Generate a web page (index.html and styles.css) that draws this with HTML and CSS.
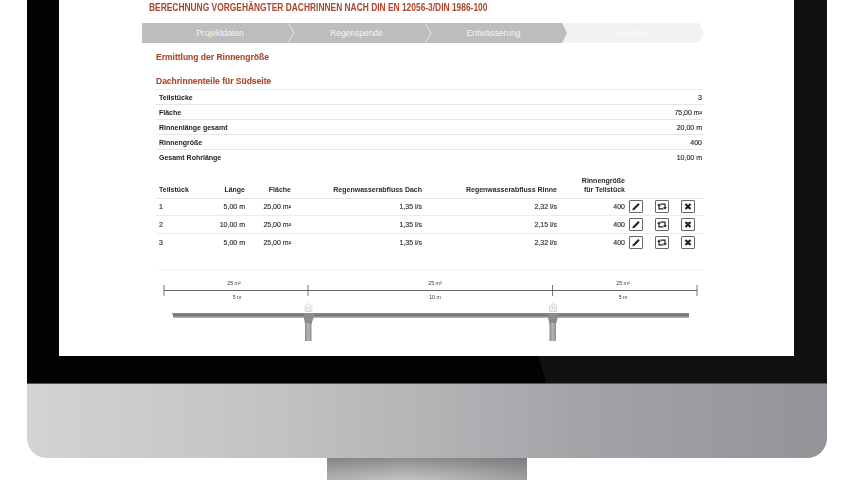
FILE: index.html
```html
<!DOCTYPE html>
<html lang="de">
<head>
<meta charset="utf-8">
<title>Berechnung vorgehängter Dachrinnen</title>
<link rel="stylesheet" href="styles.css">
</head>
<body>
<div class="monitor">
  <div class="bezel">
    <div class="glare"></div>
    <div class="screen">
      <div class="app">
        <h1 class="title"><span>BERECHNUNG VORGEHÄNGTER DACHRINNEN NACH DIN EN 12056-3/DIN 1986-100</span></h1>
        <div class="steps">
          <div class="step first">Projektdaten<svg class="tip" viewBox="0 0 7 20"><path d="M0 0L6 10L0 20Z" fill="#bdbdbd"/><path d="M0 0L6 10L0 20" fill="none" stroke="#fff" stroke-width=".6"/></svg></div>
          <div class="step">Regenspende<svg class="tip" viewBox="0 0 7 20"><path d="M0 0L6 10L0 20Z" fill="#bdbdbd"/><path d="M0 0L6 10L0 20" fill="none" stroke="#fff" stroke-width=".6"/></svg></div>
          <div class="step">Entwässerung<svg class="tip" viewBox="0 0 7 20"><path d="M0 0L5 10L0 20Z" fill="#bdbdbd"/></svg></div>
          <div class="step todo">Ergebnis<svg class="tip" viewBox="0 0 7 20"><path d="M0 0L5 10L0 20Z" fill="#f2f2f2"/></svg></div>
        </div>
        <div class="body">
          <h2 class="heading first-heading">Ermittlung der Rinnengröße</h2>
          <h2 class="heading second-heading">Dachrinnenteile für Südseite</h2>
          <div class="summary">
            <div class="row"><b>Teilstücke</b><span>3</span></div>
            <div class="row"><b>Fläche</b><span>75,00 m²</span></div>
            <div class="row"><b>Rinnenlänge gesamt</b><span>20,00 m</span></div>
            <div class="row"><b>Rinnengröße</b><span>400</span></div>
            <div class="row"><b>Gesamt Rohrlänge</b><span>10,00 m</span></div>
          </div>
          <table class="parts">
            <colgroup><col class="c1"><col class="c2"><col class="c3"><col class="c4"><col class="c5"><col class="c6"><col class="c7"></colgroup>
            <thead>
              <tr><th class="left">Teilstück</th><th>Länge</th><th>Fläche</th><th>Regenwasserabfluss Dach</th><th>Regenwasserabfluss Rinne</th><th>Rinnengröße<br>für Teilstück</th><th></th></tr>
            </thead>
            <tbody>
              <tr><td class="left">1</td><td>5,00 m</td><td>25,00 m²</td><td>1,35 l/s</td><td>2,32 l/s</td><td>400</td>
                <td><div class="actions">
                  <button class="btn" type="button" aria-label="Bearbeiten"><svg viewBox="0 0 12 11"><path d="M2.400 9.400L3 7.300L8.300 2L9.700 3.400L4.500 8.700Z" fill="#222"/></svg></button>
                  <button class="btn" type="button" aria-label="Ändern"><svg viewBox="0 0 12 11"><path d="M3 2.500L5 4.800H3.600V7.300H7.500V8.500H2.400V4.800H1ZM9 8.500L7 6.200H8.400V3.700H4.500V2.500H9.600V6.200H11Z" fill="#222"/></svg></button>
                  <button class="btn" type="button" aria-label="Löschen"><svg viewBox="0 0 12 11"><path d="M3.500 3L8.500 8M8.500 3L3.500 8" stroke="#222" stroke-width="2.200" fill="none"/></svg></button>
                </div></td></tr>
              <tr><td class="left">2</td><td>10,00 m</td><td>25,00 m²</td><td>1,35 l/s</td><td>2,15 l/s</td><td>400</td>
                <td><div class="actions">
                  <button class="btn" type="button" aria-label="Bearbeiten"><svg viewBox="0 0 12 11"><path d="M2.400 9.400L3 7.300L8.300 2L9.700 3.400L4.500 8.700Z" fill="#222"/></svg></button>
                  <button class="btn" type="button" aria-label="Ändern"><svg viewBox="0 0 12 11"><path d="M3 2.500L5 4.800H3.600V7.300H7.500V8.500H2.400V4.800H1ZM9 8.500L7 6.200H8.400V3.700H4.500V2.500H9.600V6.200H11Z" fill="#222"/></svg></button>
                  <button class="btn" type="button" aria-label="Löschen"><svg viewBox="0 0 12 11"><path d="M3.500 3L8.500 8M8.500 3L3.500 8" stroke="#222" stroke-width="2.200" fill="none"/></svg></button>
                </div></td></tr>
              <tr><td class="left">3</td><td>5,00 m</td><td>25,00 m²</td><td>1,35 l/s</td><td>2,32 l/s</td><td>400</td>
                <td><div class="actions">
                  <button class="btn" type="button" aria-label="Bearbeiten"><svg viewBox="0 0 12 11"><path d="M2.400 9.400L3 7.300L8.300 2L9.700 3.400L4.500 8.700Z" fill="#222"/></svg></button>
                  <button class="btn" type="button" aria-label="Ändern"><svg viewBox="0 0 12 11"><path d="M3 2.500L5 4.800H3.600V7.300H7.500V8.500H2.400V4.800H1ZM9 8.500L7 6.200H8.400V3.700H4.500V2.500H9.600V6.200H11Z" fill="#222"/></svg></button>
                  <button class="btn" type="button" aria-label="Löschen"><svg viewBox="0 0 12 11"><path d="M3.500 3L8.500 8M8.500 3L3.500 8" stroke="#222" stroke-width="2.200" fill="none"/></svg></button>
                </div></td></tr>
            </tbody>
          </table>
        </div>
      </div>
      <svg class="diagram" viewBox="59 265 735 91" aria-label="Dachrinnenskizze">
        <defs>
          <linearGradient id="gutter" x1="0" y1="0" x2="0" y2="1"><stop offset="0" stop-color="#8a8a8a"/><stop offset=".55" stop-color="#737373"/><stop offset="1" stop-color="#c8c8c8"/></linearGradient>
          <linearGradient id="pipe" x1="0" y1="0" x2="1" y2="0"><stop offset="0" stop-color="#8b8b8b"/><stop offset=".5" stop-color="#b5b5b5"/><stop offset="1" stop-color="#8d8d8d"/></linearGradient>
        </defs>
        <path d="M156 269.500H704" stroke="#f4f4f4"/>
        <path d="M164 290.500H697" stroke="#555" stroke-width=".9"/>
        <path d="M164 285V296M308 285V296M552.500 285V296M697 285V296" stroke="#555" stroke-width=".8"/>
        <g class="dim">
          <text x="234" y="285">25 m²</text><text x="435" y="285">25 m²</text><text x="623" y="285">25 m²</text>
          <text x="237" y="299">5 m</text><text x="435" y="299">10 m</text><text x="623" y="299">5 m</text>
        </g>
        <path d="M172 313H175L174 317Z" fill="#777"/>
        <rect x="173" y="313" width="516" height="5" fill="url(#gutter)"/>
        <path d="M303 313H315L311.500 324H305Z" fill="#8a8a8a"/>
        <rect x="305" y="323" width="6.500" height="18" fill="url(#pipe)"/>
        <path d="M547 313H559L556 324H549.500Z" fill="#8a8a8a"/>
        <rect x="549.500" y="323" width="6.500" height="18" fill="url(#pipe)"/>
        <path d="M305 311.500V306L308.500 303.500L312 306V311.500Z M307 311V307.500H310V311" fill="#f4f4f4" stroke="#cfcfcf" stroke-width=".7"/>
        <path d="M549.500 311.500V306L553 303.500L556.500 306V311.500Z M551 307H555M551 309H555" fill="#f4f4f4" stroke="#c8c8c8" stroke-width=".7"/>
      </svg>
    </div>
  </div>
  <div class="chin"></div>
  <div class="stand"></div>
</div>
</body>
</html>
```
FILE: styles.css
```css
* { box-sizing: border-box; }
html, body { margin: 0; padding: 0; background: #fff; }
body { width: 854px; height: 480px; overflow: hidden; font-family: "Liberation Sans", Arial, sans-serif; color: #333; }

.monitor { width: 800px; margin-left: 27px; display: flex; flex-direction: column; }
.bezel { position: relative; height: 384px; background: #020203; padding: 0 33px 27px 32px; border-bottom: 1px solid #55565a; }
.glare { position: absolute; inset: 0; background: #121111; clip-path: polygon(415px 0, 100% 0, 100% 100%, 519px 100%); }
.screen { position: relative; height: 356px; background: #fff; display: flex; flex-direction: column; overflow: hidden; }

.app { margin-left: 83px; width: 562px; filter: blur(.3px); }
.title { margin: 0; height: 23px; padding: 1px 0 0 7px; font-size: 10.5px; line-height: 13px; font-weight: 700; color: #a8472d; white-space: nowrap; }
.title span { display: inline-block; transform: scaleX(.8); transform-origin: 0 50%; }

.steps { display: flex; height: 20px; }
.step { position: relative; width: 137px; height: 20px; background: #bdbdbd; color: #f4f4f4; font-size: 8.5px; line-height: 20px; text-align: center; }
.step.first { width: 146px; padding-left: 10px; }
.step.todo { background: #f2f2f2; color: #fafafa; }
.tip { position: absolute; top: 0; left: 100%; width: 7px; height: 20px; z-index: 1; }

.body { padding-left: 14px; }
.heading { margin: 0; font-size: 8.5px; line-height: 12px; font-weight: 700; color: #a8472d; -webkit-text-stroke: .1px #a8472d; }
.first-heading { margin-top: 8px; }
.second-heading { margin-top: 12px; }

.summary { margin-top: 2px; border-top: 1px solid #ececec; }
.row { display: flex; justify-content: space-between; align-items: center; height: 15px; padding: 0 2px 0 3px; border-bottom: 1px solid #e6e6e6; font-size: 7px; }
.row:last-child { border-bottom: 0; }
.row b { color: #222; }
.row span { color: #2e2e2e; -webkit-text-stroke: .15px #2e2e2e; }

.parts { width: 548px; margin-top: 7px; table-layout: fixed; border-collapse: collapse; font-size: 7px; }
.c1 { width: 50px; } .c2 { width: 39px; } .c3 { width: 46px; } .c4 { width: 131px; } .c5 { width: 135px; } .c6 { width: 68px; } .c7 { width: 79px; }
.parts th, .parts td { padding: 0; text-align: right; }
.parts th.left, .parts td.left { text-align: left; padding-left: 3px; }
.parts th { height: 26px; padding-bottom: 4px; vertical-align: bottom; line-height: 9px; font-weight: 700; color: #2a2a2a; border-bottom: 1px solid #e2e2e2; }
.parts td { height: 17.5px; color: #2e2e2e; -webkit-text-stroke: .15px #2e2e2e; border-bottom: 1px solid #ececec; }
.parts tr:last-child td { border-bottom: 0; }

.actions { display: flex; gap: 12px; padding-left: 4px; }
.btn { display: block; width: 14px; height: 13px; padding: 0; background: #fff; border: 1px solid #666; border-radius: 1px; }
.btn svg { display: block; width: 12px; height: 11px; }

.diagram { display: block; width: 735px; height: 91px; margin-top: auto; flex: none; filter: blur(.3px); }
.dim text { font-family: "Liberation Sans", Arial, sans-serif; font-size: 5.2px; fill: #333; text-anchor: middle; }

.chin { height: 74px; background: linear-gradient(90deg, #d2d3d5 0%, #c2c3c5 30%, #b3b4b6 50%, #a2a3a6 70%, #939497 100%); border-radius: 0 0 20px 20px; }
.stand { width: 200px; height: 22px; margin-left: 300px; background: linear-gradient(180deg, rgba(90,90,92,.5), rgba(100,100,102,0) 90%), linear-gradient(90deg, #aeaeb0, #c0c0c2 40%, #b0b0b2 70%, #9d9da0); }
```
